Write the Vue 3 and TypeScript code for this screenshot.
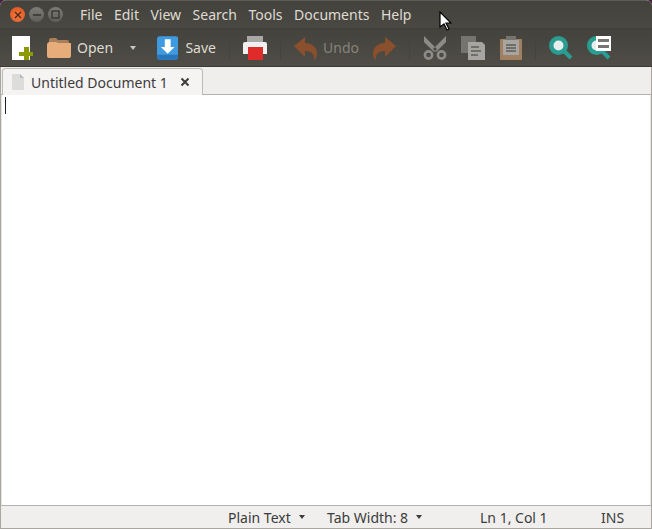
<script setup lang="ts">
const menus = ['File', 'Edit', 'View', 'Search', 'Tools', 'Documents', 'Help'];
</script>

<template>
  <div class="desktop">
    <div class="window">
      <header class="titlebar">
        <div class="controls">
          <span class="ctl ctl-close">
            <svg width="8" height="8" viewBox="0 0 8 8"><path d="M1 1l6 6M7 1L1 7" stroke="#4a2a1a" stroke-width="1.4" /></svg>
          </span>
          <span class="ctl">
            <svg width="10" height="8" viewBox="0 0 10 8"><path d="M1 4h8" stroke="#35342f" stroke-width="1.6" /></svg>
          </span>
          <span class="ctl">
            <svg width="9" height="9" viewBox="0 0 9 9"><rect x="1" y="1" width="7" height="7" fill="none" stroke="#35342f" stroke-width="1.3" /></svg>
          </span>
        </div>
        <nav class="menu">
          <span v-for="m in menus" :key="m" class="menu-item">{{ m }}</span>
        </nav>
      </header>

      <div class="toolbar">
        <button class="tool w-new">
          <svg width="21" height="24" viewBox="0 0 21 24">
            <rect x="0" y="0" width="18" height="24" fill="#fff" />
            <path d="M12 11h5v5h4v4h-4v4h-5v-4H7v-4h5z" fill="#8a9a00" />
          </svg>
        </button>
        <button class="tool w-open">
          <svg width="24" height="20" viewBox="0 0 24 20">
            <path d="M2 2q0-2 2-2h5l2 2h9q2 0 2 2v4H2z" fill="#a97f5b" />
            <path d="M0 7q0-3 3-3h6l2 1h13v13q0 2-2 2H2q-2 0-2-2z" fill="#e6ac7a" />
          </svg>
          <span class="label">Open</span>
        </button>
        <button class="tool w-arrow"><span class="caret"></span></button>
        <button class="tool w-save">
          <svg width="22" height="24" viewBox="0 0 22 24">
            <rect width="22" height="24" rx="3" fill="#3f9ae0" />
            <path d="M0 19h22v2q0 3-3 3H3q-3 0-3-3z" fill="#2a76bd" />
            <path d="M8 3h6v8h4l-7 7-7-7h4z" fill="#fff" />
          </svg>
          <span class="label save-label">Save</span>
        </button>
        <i class="sep"></i>
        <button class="tool w-print">
          <svg width="24" height="24" viewBox="0 0 24 24">
            <path d="M4 0h16v7H4z" fill="#a8a8a6" />
            <path d="M2 6h20q2 0 2 2v10H0V8q0-2 2-2z" fill="#f0f0f0" />
            <rect x="5" y="11" width="15" height="13" fill="#e02b2b" />
          </svg>
        </button>
        <i class="sep"></i>
        <button class="tool w-undo dim">
          <svg width="23" height="24" viewBox="0 0 23 24">
            <path d="M11 1v6c7 0 12 4 12 11 0 2-1 5-3 6 1-6-3-9-9-9v6L0 10z" fill="#8a4f2c" />
          </svg>
          <span class="label">Undo</span>
        </button>
        <button class="tool w-redo">
          <svg width="23" height="24" viewBox="0 0 23 24">
            <path d="M12 1v6C5 7 0 11 0 18c0 2 1 5 3 6-1-6 3-9 9-9v6l11-11z" fill="#8a4f2c" />
          </svg>
        </button>
        <i class="sep"></i>
        <button class="tool w-cut">
          <svg width="24" height="24" viewBox="0 0 24 24">
            <path d="M1 0l13 13-3 3L1 6zM23 0L10 13l3 3 10-10z" fill="#8c8b87" />
            <circle cx="5.5" cy="19" r="3.6" fill="none" stroke="#8c8b87" stroke-width="2.6" />
            <circle cx="18.5" cy="19" r="3.6" fill="none" stroke="#8c8b87" stroke-width="2.6" />
          </svg>
        </button>
        <button class="tool w-copy">
          <svg width="24" height="24" viewBox="0 0 24 24">
            <rect width="15" height="17" fill="#75746f" />
            <path d="M7 6h14l3 3v15H7z" fill="#a6a5a1" />
            <path d="M10 11h8M10 15h10M10 19h7" stroke="#5d5c57" stroke-width="1.4" />
          </svg>
        </button>
        <button class="tool w-paste">
          <svg width="22" height="24" viewBox="0 0 22 24">
            <rect y="3" width="22" height="21" rx="1" fill="#a2805f" />
            <rect x="3" y="4" width="16" height="15" fill="#a6a5a1" />
            <rect x="6" y="0" width="10" height="4" fill="#75746f" />
            <path d="M6 9h10M6 12h10M6 15h10" stroke="#5d5c57" stroke-width="1.4" />
          </svg>
        </button>
        <i class="sep"></i>
        <button class="tool w-find">
          <svg width="24" height="24" viewBox="0 0 24 24">
            <circle cx="9.5" cy="9.5" r="7.25" fill="#e8eeee" stroke="#2a9d92" stroke-width="4.5" />
            <path d="M15 15l7 7" stroke="#2a9d92" stroke-width="4" />
          </svg>
        </button>
        <button class="tool w-replace">
          <svg width="25" height="24" viewBox="0 0 25 24">
            <circle cx="9.5" cy="9.5" r="7.25" fill="#e8eeee" stroke="#2a9d92" stroke-width="4.5" />
            <path d="M15 15l7 7" stroke="#2a9d92" stroke-width="4" />
            <rect x="9" y="0" width="15" height="15" fill="#fff" />
            <path d="M11 3h11v3H11zM11 9h11v3H11z" fill="#75746f" />
          </svg>
        </button>
      </div>

      <div class="tabbar">
        <div class="tab">
          <svg class="tab-doc" width="12" height="16" viewBox="0 0 12 16">
            <path d="M0 0h8l4 4v12H0z" fill="#dcdcda" />
            <path d="M8 0l4 4H8z" fill="#b9b9b7" />
          </svg>
          <span class="tab-title">Untitled Document 1</span>
          <svg class="tab-close" width="10" height="10" viewBox="0 0 10 10"><path d="M1.5 1.5l7 7M8.5 1.5l-7 7" stroke="#3c3c3c" stroke-width="2" /></svg>
        </div>
      </div>

      <main class="editor"><i class="cursor"></i></main>

      <footer class="statusbar">
        <span class="st st-lang">Plain Text <i class="mini"></i></span>
        <span class="st st-tab">Tab Width: 8 <i class="mini"></i></span>
        <span class="st st-pos">Ln 1, Col 1</span>
        <span class="st st-ins">INS</span>
      </footer>
    </div>

    <svg class="pointer" width="13" height="20" viewBox="0 0 13 20">
      <path d="M1 1v15l4-3 3 6 2-1-3-6h5z" fill="#fff" stroke="#000" stroke-width="1.2" />
    </svg>
  </div>
</template>

<style>
html, body { margin: 0; background: #3a1530; }
</style>

<style scoped>
.desktop {
  position: relative;
  width: 652px;
  height: 529px;
  overflow: hidden;
  background: #4a1c3e;
  font-family: "Noto Sans", "Open Sans", sans-serif;
}
.window {
  display: flex;
  flex-direction: column;
  width: 652px;
  height: 529px;
  border-radius: 6px 6px 0 0;
  overflow: hidden;
  background: #f2f1f0;
}
.titlebar {
  display: flex;
  align-items: center;
  height: 28px;
  flex: none;
  box-sizing: border-box;
  border-top: 1px solid #5e5c56;
  background: linear-gradient(#44423d, #4a4842);
}
.controls { display: flex; gap: 4px; margin-left: 10px; }
.ctl {
  display: flex;
  align-items: center;
  justify-content: center;
  flex: none;
  box-sizing: border-box;
  width: 15px;
  height: 15px;
  border-radius: 50%;
  background: linear-gradient(#7d7c76, #5f5e59);
}
.ctl-close { background: radial-gradient(circle at 50% 60%, #f57a3e, #d9501e); }
.menu { display: flex; margin-left: 17px; }
.menu-item {
  color: #dfdbd2;
  font-size: 14px;
  line-height: 28px;
  margin-right: 11.5px;
}
.toolbar {
  display: flex;
  align-items: center;
  flex: none;
  height: 39px;
  padding-left: 12px;
  box-sizing: border-box;
  border-top: 1px solid #3f3e39;
  border-bottom: 1px solid #3a3934;
  background: linear-gradient(#44423d, #4f4d46);
}
.tool {
  display: flex;
  align-items: center;
  padding: 0;
  border: 0;
  background: none;
  font: inherit;
  flex: none;
}
.label { color: #dfdbd2; font-size: 14px; margin-left: 6px; }
.save-label { margin-left: 7px; }
.dim .label { color: #85837c; }
.w-new { width: 35px; }
.w-open { width: 81px; }
.w-arrow { width: 29px; }
.w-save { width: 59px; }
.w-print { width: 24px; }
.w-undo { width: 79px; }
.w-redo { width: 23px; }
.w-cut { width: 24px; margin-right: 14px; }
.w-copy { width: 24px; margin-right: 15px; }
.w-paste { width: 22px; }
.w-find { width: 24px; margin-right: 14px; }
.w-replace { width: 25px; }
.caret {
  width: 0;
  height: 0;
  margin-left: 2px;
  border-left: 3.5px solid transparent;
  border-right: 3.5px solid transparent;
  border-top: 4px solid #c9c6bd;
}
.sep {
  display: block;
  flex: none;
  width: 1px;
  height: 24px;
  margin: 0 13px;
  background: #44433d;
}
.tabbar {
  display: flex;
  flex: none;
  height: 28px;
  box-sizing: border-box;
  padding: 1px 0 0 2px;
  background: #efeeec;
  border-left: 1px solid #a8a69f;
  border-right: 1px solid #a8a69f;
  border-bottom: 1px solid #b5b3af;
}
.tab {
  display: flex;
  align-items: center;
  width: 201px;
  height: 27px;
  margin-bottom: -1px;
  margin-left: -1px;
  box-sizing: border-box;
  padding-left: 9px;
  background: #f5f4f3;
  border: 1px solid #bdbbb7;
  border-bottom: 0;
  border-radius: 4px 4px 0 0;
}
.tab-doc { flex: none; }
.tab-title {
  margin-left: 7px;
  color: #3c3c3c;
  font-size: 14px;
  white-space: nowrap;
}
.tab-close { flex: none; margin-left: auto; margin-right: 12px; }
.editor {
  flex: 1;
  position: relative;
  background: #fff;
  border-left: 1px solid #a8a69f;
  border-right: 1px solid #a8a69f;
  box-shadow: inset 1px 0 0 #e6e5e3, inset -1px 0 0 #e6e5e3;
}
.cursor {
  position: absolute;
  left: 4px;
  top: 2px;
  width: 1px;
  height: 17px;
  background: #222;
}
.statusbar {
  display: flex;
  align-items: center;
  flex: none;
  height: 24px;
  box-sizing: border-box;
  background: #f0efed;
  border-top: 1px solid #b5b3af;
  border-bottom: 1px solid #a8a69f;
  border-left: 1px solid #a8a69f;
  border-right: 1px solid #a8a69f;
  color: #3c3c3c;
  font-size: 14px;
}
.st { white-space: nowrap; display: flex; align-items: center; }
.st-lang { margin-left: 227px; width: 99px; }
.st-tab { width: 153px; }
.st-pos { width: 121px; }
.mini {
  display: inline-block;
  width: 0;
  height: 0;
  margin-left: 8px;
  border-left: 3px solid transparent;
  border-right: 3px solid transparent;
  border-top: 4px solid #3c3c3c;
}
.pointer { position: absolute; left: 439px; top: 11px; }
</style>
